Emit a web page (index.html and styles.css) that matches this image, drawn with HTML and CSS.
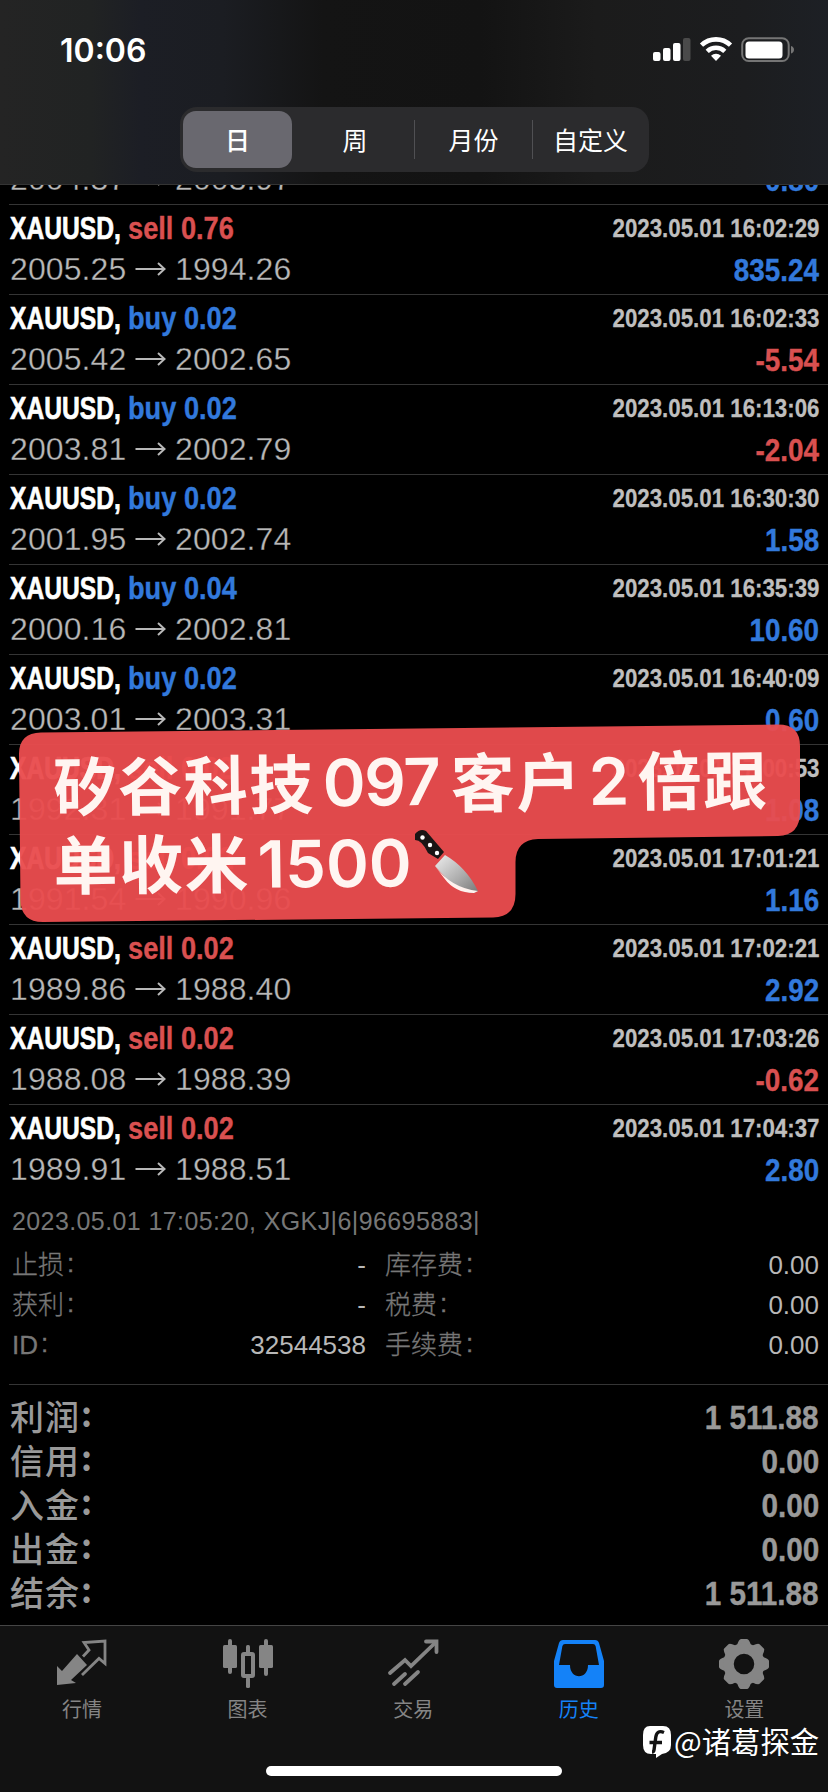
FILE: index.html
```html
<!DOCTYPE html>
<html lang="zh-CN">
<head>
<meta charset="utf-8">
<title>历史</title>
<link rel="stylesheet" href="styles.css">
</head>
<body>
<svg width="0" height="0" class="defs"><defs><symbol id="arrow" viewBox="0 0 30 14"><path d="M0 7H29M22.500 1L29 7L22.500 13" fill="none" stroke="currentColor" stroke-width="2"/></symbol></defs></svg>
<div class="screen">
<header class="header">
  <div class="status">
    <span class="clock">10:06</span>
    <svg class="status-icons" width="146" height="28" viewBox="0 0 146 28">
      <g fill="#fff"><rect x="1" y="16" width="7.500" height="9" rx="2"/><rect x="11" y="12" width="7.500" height="13" rx="2"/><rect x="21" y="7" width="7.500" height="18" rx="2"/><rect x="31" y="2" width="7.500" height="23" rx="2" fill="#4a4a4a"/></g>
      <g fill="none" stroke="#fff" stroke-width="4.600"><path d="M49.500 9.200a21 21 0 0 1 29 0"/><path d="M55.200 15.300a12.800 12.800 0 0 1 17.600 0"/></g>
      <path d="M64 25l-5-5.200a7.300 7.300 0 0 1 10 0z" fill="#fff"/>
      <rect x="90.200" y="2.200" width="46.500" height="22.800" rx="6.500" fill="none" stroke="#757575" stroke-width="2"/>
      <rect x="93.500" y="5.500" width="37" height="17" rx="3.500" fill="#fff"/>
      <path d="M139 10v7.500c4-1 4-6.500 0-7.500z" fill="#757575"/>
    </svg>
  </div>
  <nav class="segmented"><span class="seg selected">日</span><span class="seg">周</span><span class="seg ruled">月份</span><span class="seg ruled">自定义</span></nav>
</header>
<main class="content">
<section class="deals">
  <article class="deal"><b class="symbol">XAUUSD,</b><b class="side buy">buy 0.02</b><time>2023.05.01 16:00:12</time><div class="prices"><span class="open">2004.37</span><svg class="arrow"><use href="#arrow"/></svg><span>2003.97</span></div><b class="result buy">0.80</b></article>
  <article class="deal"><b class="symbol">XAUUSD,</b><b class="side sell">sell 0.76</b><time>2023.05.01 16:02:29</time><div class="prices"><span class="open">2005.25</span><svg class="arrow"><use href="#arrow"/></svg><span>1994.26</span></div><b class="result buy">835.24</b></article>
  <article class="deal"><b class="symbol">XAUUSD,</b><b class="side buy">buy 0.02</b><time>2023.05.01 16:02:33</time><div class="prices"><span class="open">2005.42</span><svg class="arrow"><use href="#arrow"/></svg><span>2002.65</span></div><b class="result sell">-5.54</b></article>
  <article class="deal"><b class="symbol">XAUUSD,</b><b class="side buy">buy 0.02</b><time>2023.05.01 16:13:06</time><div class="prices"><span class="open">2003.81</span><svg class="arrow"><use href="#arrow"/></svg><span>2002.79</span></div><b class="result sell">-2.04</b></article>
  <article class="deal"><b class="symbol">XAUUSD,</b><b class="side buy">buy 0.02</b><time>2023.05.01 16:30:30</time><div class="prices"><span class="open">2001.95</span><svg class="arrow"><use href="#arrow"/></svg><span>2002.74</span></div><b class="result buy">1.58</b></article>
  <article class="deal"><b class="symbol">XAUUSD,</b><b class="side buy">buy 0.04</b><time>2023.05.01 16:35:39</time><div class="prices"><span class="open">2000.16</span><svg class="arrow"><use href="#arrow"/></svg><span>2002.81</span></div><b class="result buy">10.60</b></article>
  <article class="deal"><b class="symbol">XAUUSD,</b><b class="side buy">buy 0.02</b><time>2023.05.01 16:40:09</time><div class="prices"><span class="open">2003.01</span><svg class="arrow"><use href="#arrow"/></svg><span>2003.31</span></div><b class="result buy">0.60</b></article>
  <article class="deal"><b class="symbol">XAUUSD,</b><b class="side sell">sell 0.02</b><time>2023.05.01 17:00:53</time><div class="prices"><span class="open">1992.31</span><svg class="arrow"><use href="#arrow"/></svg><span>1991.77</span></div><b class="result buy">1.08</b></article>
  <article class="deal"><b class="symbol">XAUUSD,</b><b class="side sell">sell 0.02</b><time>2023.05.01 17:01:21</time><div class="prices"><span class="open">1991.54</span><svg class="arrow"><use href="#arrow"/></svg><span>1990.96</span></div><b class="result buy">1.16</b></article>
  <article class="deal"><b class="symbol">XAUUSD,</b><b class="side sell">sell 0.02</b><time>2023.05.01 17:02:21</time><div class="prices"><span class="open">1989.86</span><svg class="arrow"><use href="#arrow"/></svg><span>1988.40</span></div><b class="result buy">2.92</b></article>
  <article class="deal"><b class="symbol">XAUUSD,</b><b class="side sell">sell 0.02</b><time>2023.05.01 17:03:26</time><div class="prices"><span class="open">1988.08</span><svg class="arrow"><use href="#arrow"/></svg><span>1988.39</span></div><b class="result sell">-0.62</b></article>
  <article class="deal"><b class="symbol">XAUUSD,</b><b class="side sell">sell 0.02</b><time>2023.05.01 17:04:37</time><div class="prices"><span class="open">1989.91</span><svg class="arrow"><use href="#arrow"/></svg><span>1988.51</span></div><b class="result buy">2.80</b></article>
</section>
<section class="details">
  <p class="comment">2023.05.01 17:05:20, XGKJ|6|96695883|</p>
  <div class="detail-grid">
    <span class="label">止损<i>:</i></span><span class="num dash">-</span><span class="label second">库存费<i>:</i></span><span class="num">0.00</span>
    <span class="label">获利<i>:</i></span><span class="num dash">-</span><span class="label second">税费<i>:</i></span><span class="num">0.00</span>
    <span class="label">ID<i>:</i></span><span class="num">32544538</span><span class="label second">手续费<i>:</i></span><span class="num">0.00</span>
  </div>
</section>
<section class="summary">
  <div class="total"><span>利润<i>:</i></span><b>1 511.88</b></div>
  <div class="total"><span>信用<i>:</i></span><b>0.00</b></div>
  <div class="total"><span>入金<i>:</i></span><b>0.00</b></div>
  <div class="total"><span>出金<i>:</i></span><b>0.00</b></div>
  <div class="total"><span>结余<i>:</i></span><b>1 511.88</b></div>
</section>
</main>
<footer class="tabbar">
  <div class="tab"><svg width="52" height="52" viewBox="0 0 52 52"><path d="M1 19L6 24L21 7L31 18L15 33L20 36L1 38Z" fill="currentColor" transform="translate(0 1)"/><path d="M27 9.500L33 3L28 -4.500L49 -6V16.500L43 11.500L26 28" fill="none" stroke="currentColor" stroke-width="2.800" transform="translate(0 1)"/></svg><span>行情</span></div>
  <div class="tab"><svg width="52" height="52" viewBox="0 0 52 52"><g fill="currentColor"><rect x="1" y="-1" width="14" height="23" rx="1.500"/><rect x="6" y="-7" width="4" height="35" rx="2"/><rect x="37" y="-1" width="14" height="23" rx="1.500"/><rect x="42" y="-7" width="4" height="37" rx="2"/><rect x="24" y="-1" width="4" height="9" rx="1.500"/><rect x="24" y="31" width="4" height="11" rx="1.500"/></g><rect x="21" y="8" width="10" height="22" rx="1" fill="none" stroke="currentColor" stroke-width="4"/></svg><span>图表</span></div>
  <div class="tab"><svg width="52" height="52" viewBox="0 0 52 52"><g fill="none" stroke="currentColor" stroke-width="3.800" stroke-linecap="round"><path d="M3 27L18 14L24 20L49 -4"/><path d="M39 -4.500H49.500V6"/><path d="M7 38L18 28M18 38L31 26"/></g></svg><span>交易</span></div>
  <div class="tab active"><svg width="52" height="52" viewBox="0 0 52 52"><path fill-rule="evenodd" d="M10 -6H42Q45 -6 46 -3L51 15V39Q51 42 48 42H4Q1 42 1 39V15L6 -3Q7 -6 10 -6ZM12 -2Q10 -2 9.400 0L6 19H17C17 34 35 34 35 19H46L42.600 0Q42 -2 40 -2Z" fill="currentColor"/></svg><span>历史</span></div>
  <div class="tab"><svg width="52" height="52" viewBox="0 0 52 52"><g transform="translate(26 18)"><g fill="currentColor"><g id="teeth"><path d="M-3 -25H3Q5 -25 7 -19H-7Q-5 -25 -3 -25ZM-3 25H3Q5 25 7 19H-7Q-5 25 -3 25ZM-25 -3V3Q-25 5 -19 7V-7Q-25 -5 -25 -3ZM25 -3V3Q25 5 19 7V-7Q25 -5 25 -3Z"/></g><use href="#teeth" transform="rotate(45)"/></g><circle r="15.500" fill="none" stroke="currentColor" stroke-width="10.500"/></g></svg><span>设置</span></div>
  <div class="home-indicator"></div>
</footer>
<svg class="banner" width="828" height="220" viewBox="0 710 828 220">
  <path d="M41 732.500L778 724.500Q800 724.500 800 746V812Q800 835.500 778 836L538 839Q515.500 840 515.500 862V894Q515.500 917 493 917.500L43 922Q21 922 20.500 900L19 754Q19 733 41 732.500Z" fill="#e94c4e" fill-opacity=".96"/>
  <g class="banner-text" transform="rotate(-.6 53 810)">
    <text y="811"><tspan x="53">矽谷科技</tspan><tspan x="323" y="809" class="digits" textLength="118">097</tspan><tspan x="451" y="811.500">客户</tspan><tspan x="589" y="810.500" class="digits">2</tspan><tspan x="638" y="811.500">倍跟</tspan></text>
    <text y="889.500"><tspan x="53">单收米</tspan><tspan x="257" y="890" class="digits">1500</tspan></text>
  </g>
  <defs><linearGradient id="blade" x1="0" y1="0" x2="1" y2="1"><stop offset="0" stop-color="#eee"/><stop offset=".6" stop-color="#aaa"/><stop offset="1" stop-color="#777"/></linearGradient></defs>
  <path d="M415 834Q420 828 426 831L444 852L438 859L428 853Q422 840 415 840Z" fill="#1b1515"/>
  <path d="M445 855Q466 867 478 891L474 893Q455 892 444 876L435 866Z" fill="url(#blade)"/>
  <path d="M435 866Q451 888 478 891L474 893Q455 893 444 878Z" fill="#fff2ee"/>
  <g fill="#fff"><circle cx="422.500" cy="837.500" r="2.200"/><circle cx="430" cy="845" r="2.200"/><circle cx="437" cy="853" r="2.200"/></g>
</svg>
<div class="watermark"><svg width="30" height="34" viewBox="0 0 30 34"><path d="M8 1H21Q29 1 29 10V20Q29 28 20 29L14 33V29H9Q1 29 1 20V10Q1 1 8 1Z" fill="#fff"/><path d="M22 7.500Q15 4.500 13.800 12L12 25Q11.700 27 10 27M7.500 17.500H20" fill="none" stroke="#121212" stroke-width="3.400"/></svg><span>@诸葛探金</span></div>
</div>
</body>
</html>
```
FILE: styles.css
```css
* { box-sizing: border-box; }
body { margin: 0; background: #000; font-family: "Liberation Sans", "Noto Sans CJK SC", sans-serif; }
i { font-style: normal; }
.defs { position: absolute; }
.screen { position: relative; display: flex; flex-direction: column; width: 828px; height: 1792px; overflow: hidden; background: #000; }

.header { position: relative; z-index: 2; flex: none; height: 185px; padding-top: 36px; border-bottom: 1px solid #343434; background: linear-gradient(90deg, #242424 0, #212323 11%, #1c1e25 17%, #1b1d22 27%, #141414 39%, #131313 58%, #1b1b1b 72%, #1c1d1f 90%, #1d2025 100%); }
.status { display: flex; justify-content: space-between; height: 28px; padding: 0 30px 0 60px; }
.clock { color: #fff; font: 600 32px/29px Inter, sans-serif; letter-spacing: 0; }
.segmented { display: grid; grid-template-columns: 109px 122px 118px 117px; width: 469px; height: 65px; margin: 43px 0 0 180px; padding: 4px 0 4px 3px; border-radius: 17px; background: #2b2b2d; }
.seg { position: relative; display: flex; align-items: center; justify-content: center; padding-bottom: 1px; color: #fff; font: 25px "Noto Sans CJK SC", sans-serif; }
.seg:nth-child(2) { padding-left: 4px; }
.seg:last-child { padding-right: 1px; }
.seg.selected { border-radius: 13px; background: #69686f; font-weight: 500; }
.ruled { border-left: 1px solid transparent; border-image: linear-gradient(transparent 17%, #505053 17%, #505053 83%, transparent 83%) 1; }

.content { flex: none; height: 1511px; margin-top: -71px; padding-left: 9px; }
.deal { display: grid; grid-template-columns: 118px 1fr auto; grid-template-rows: 41px 41px; height: 90px; padding: 3px 9px 0 1px; border-top: 1px solid #353535; line-height: 41px; font-size: 32px; white-space: nowrap; }
.symbol { color: #fff; transform: scaleX(.77); transform-origin: left; -webkit-text-stroke: .7px currentColor; }
.side { justify-self: start; transform: scaleX(.85); transform-origin: left; -webkit-text-stroke: .4px currentColor; }
.buy { color: #3279dc; }
.sell { color: #d95050; }
time { justify-self: end; color: #bebebe; font-size: 26px; font-weight: 700; transform: scaleX(.857); transform-origin: right; -webkit-text-stroke: .3px currentColor; }
.prices { grid-column: 1 / 3; display: flex; align-items: center; color: #b8b8b8; -webkit-text-stroke: .3px #000; letter-spacing: .1px; }
.open { width: 125px; }
.arrow { width: 31px; height: 14px; margin: 0 9px 1px 0; }
.result { position: relative; top: 1px; justify-self: end; font-size: 32px; transform: scaleX(.87); transform-origin: right; -webkit-text-stroke: .4px currentColor; }

.details { height: 190px; padding: 10px 9px 0 3px; color: #777; }
.comment { margin: 0; font-size: 25px; line-height: 34px; letter-spacing: .4px; }
.detail-grid { display: grid; grid-template-columns: 120px 234px 120px 1fr; grid-auto-rows: 40px; line-height: 40px; font-size: 25px; padding-top: 7px; }
.label { font-family: "Liberation Sans", "Noto Sans CJK SC", sans-serif; font-size: 26px; font-weight: 300; -webkit-text-stroke: .3px currentColor; }
.label i { position: relative; top: -2px; margin-left: 3px; }
.second { padding-left: 19px; white-space: nowrap; }
.num { text-align: right; color: #b8b8b8; font-size: 26px; letter-spacing: 0; }

.summary { height: 241px; padding: 9px 9px 0 1px; border-top: 1px solid #353535; color: #999; }
.total { display: flex; justify-content: space-between; height: 44px; font-size: 34px; line-height: 44px; }
.total span { font-family: "Noto Sans CJK SC", sans-serif; font-weight: 500; letter-spacing: 1px; }
.total i { position: relative; top: -3px; margin-left: 1px; font-weight: 700; }
.total b { position: relative; top: 2px; font-size: 33px; transform: scaleX(.9); transform-origin: right; -webkit-text-stroke: .4px currentColor; }

.tabbar { position: relative; flex: none; display: grid; grid-template-columns: repeat(5, 165.600px); height: 167px; padding-top: 20px; border-top: 1px solid #454545; background: #121212; align-items: start; }
.tab { display: flex; flex-direction: column; align-items: center; width: 164px; color: #858585; font: 20px/22px "Noto Sans CJK SC", sans-serif; }
.tab svg { overflow: visible; }
.tab.active { color: #1482f8; }
.home-indicator { position: absolute; left: 266px; bottom: 16px; width: 296px; height: 10px; border-radius: 5px; background: #fff; }

.banner { position: absolute; z-index: 3; left: 0; top: 710px; }
.banner-text { fill: #fff5f1; font: 700 64px "Noto Sans CJK SC", sans-serif; letter-spacing: 1.500px; }
.digits { font: 600 65px Inter, sans-serif; letter-spacing: 0; }
.watermark { position: absolute; z-index: 4; right: 9px; bottom: 30px; display: flex; align-items: center; gap: 2px; color: #fff; font: 29.300px/44px "Noto Sans CJK SC", sans-serif; }
.watermark svg { margin-top: 4px; }
```
